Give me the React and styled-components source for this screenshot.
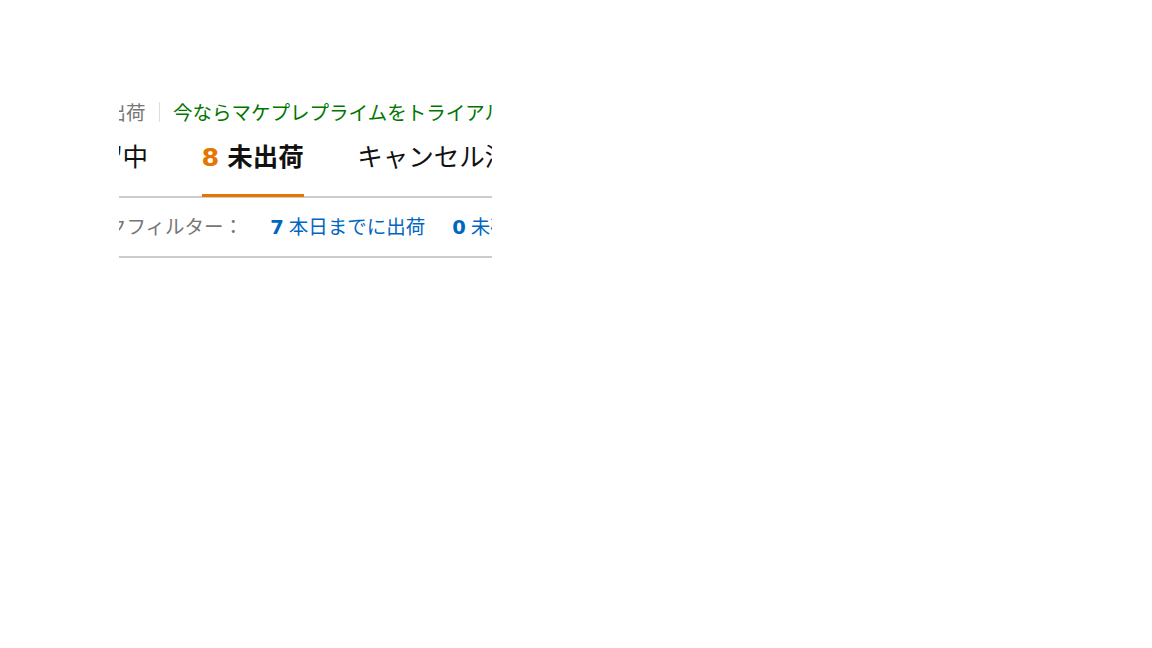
import React from 'react'
import styled, { createGlobalStyle } from 'styled-components';

const GlobalStyle = createGlobalStyle `
  body {
    margin: 0;
    background: #fff;
    font-family: "Noto Sans CJK JP", "Noto Sans", sans-serif;
  }
`;

const Panel = styled.div `
  width: 373px;
  margin: 95px 0 0 119px;
  overflow: hidden;
  border-bottom: 2px solid #ccc;
  box-shadow: 0 4px 4px -3px rgba(0, 0, 0, 0.12);
`;

// the panel is scrolled sideways, so the left part of each row is cut off
const Scroller = styled.div `
  width: 900px;
  margin-left: -100px;
`;

const InfoRow = styled.div `
  display: flex;
  align-items: center;
  height: 34px;
  padding-left: 68px;
  font-size: 19.5px;
  line-height: 34px;
  white-space: nowrap;
`;

const InfoText = styled.span `
  color: ${p => p.green ? '#007600' : '#767676'};
`;

const Divider = styled.span `
  width: 1px;
  height: 20px;
  margin: 0 13px 0 13.5px;
  background: #ddd;
`;

const TabBar = styled.div `
  display: flex;
  gap: 53.5px;
  padding-left: 52.5px;
  border-bottom: 2px solid #ccc;
  white-space: nowrap;
`;

const Tab = styled.div `
  height: 34px;
  padding: 9px 0 22px;
  margin-bottom: -1px;
  font-size: 25.5px;
  line-height: 34px;
  color: #111;
  font-weight: ${p => p.active ? 700 : 400};
  border-bottom: 3px solid ${p => p.active ? '#e77600' : 'transparent'};
`;

const Count = styled.b `
  font-family: "DejaVu Sans", "Noto Sans", sans-serif;
  font-weight: 700;
  line-height: 1;
`;

const TabCount = styled(Count) `
  color: #e77600;
  margin-right: 8px;
`;

const FilterRow = styled.div `
  display: flex;
  align-items: center;
  gap: 27px;
  height: 56px;
  padding: 0 0 2px 29.5px;
  font-size: 19.5px;
  line-height: 56px;
  white-space: nowrap;
`;

const FilterLabel = styled.span `
  color: #767676;
`;

const FilterLink = styled.a `
  color: #0066c0;
  text-decoration: none;
`;

const FilterCount = styled(Count) `
  margin-right: 5px;
`;

const tabs = [
  { label: '保留中' },
  { label: '未出荷', count: 8, active: true },
  { label: 'キャンセル済み' },
  { label: '出荷済み' },
];

const filters = [
  { count: 7, label: '本日までに出荷' },
  { count: 0, label: '未確認' },
  { count: 1, label: '配送遅延' },
];

const App = () => (
  <>
    <GlobalStyle/>
    <Panel>
      <Scroller>
        <InfoRow>
          <InfoText>未出荷</InfoText>
          <Divider/>
          <InfoText green>今ならマケプレプライムをトライアルでご利用いただけます</InfoText>
        </InfoRow>
        <TabBar>
          {tabs.map(t => (
            <Tab key={t.label} active={t.active}>
              {t.count != null && <TabCount>{t.count}</TabCount>}
              {t.label}
            </Tab>
          ))}
        </TabBar>
        <FilterRow>
          <FilterLabel>クイックフィルター：</FilterLabel>
          {filters.map(f => (
            <FilterLink key={f.label} href="#">
              <FilterCount>{f.count}</FilterCount>{f.label}
            </FilterLink>
          ))}
        </FilterRow>
      </Scroller>
    </Panel>
  </>
)

export default App
